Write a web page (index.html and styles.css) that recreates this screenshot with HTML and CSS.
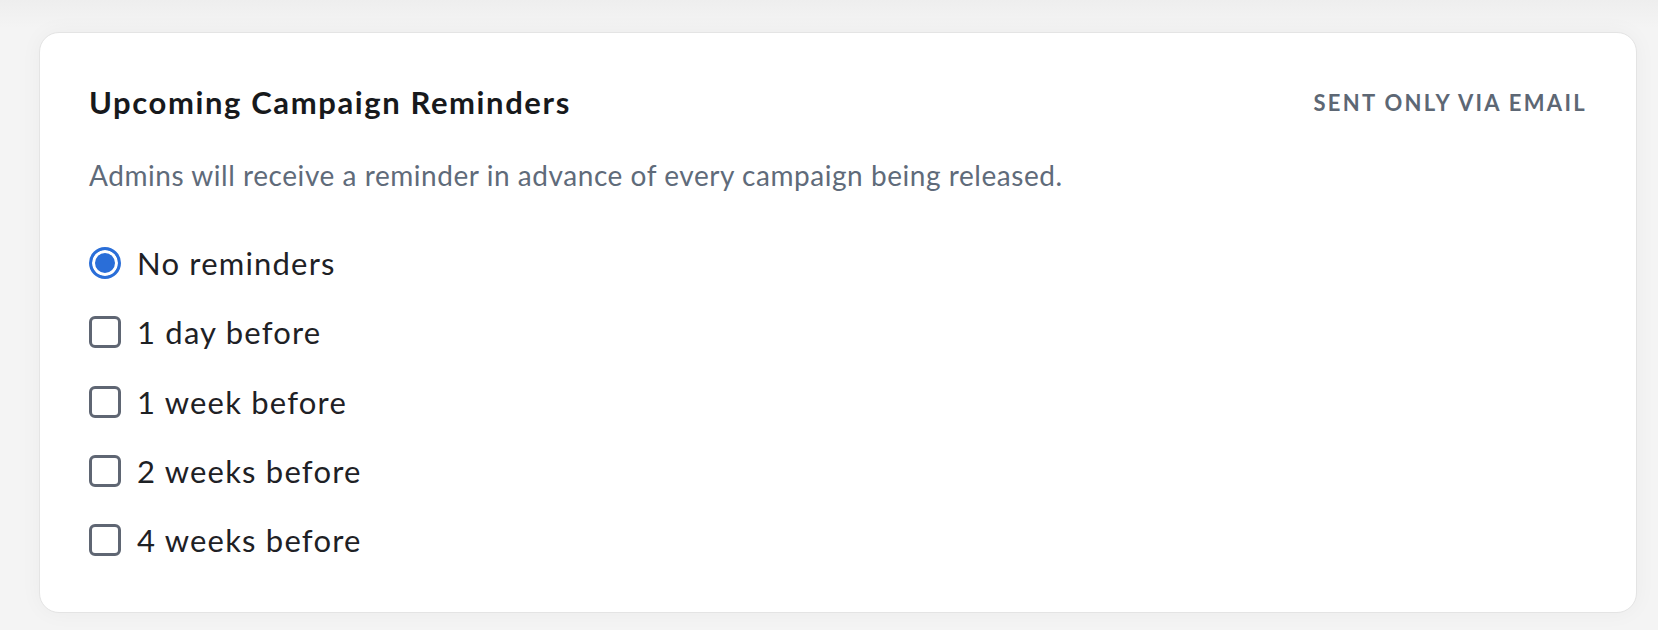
FILE: index.html
```html
<!DOCTYPE html>
<html lang="en">
<head>
    <meta charset="UTF-8">
    <meta name="viewport" content="width=device-width, initial-scale=1.0">
    <title>Notification Settings</title>
    <link rel="stylesheet" href="styles.css">
</head>
<body>

    <div class="page">
        <section class="card">
            <div class="card-header">
                <h2>Upcoming Campaign Reminders</h2>
                <span class="channel">Sent only via email</span>
            </div>

            <p class="hint">Admins will receive a reminder in advance of every campaign being released.</p>

            <div class="options">
                <label class="option">
                    <input type="radio" name="none" checked>
                    <span>No reminders</span>
                </label>
                <label class="option">
                    <input type="checkbox" name="day1">
                    <span>1 day before</span>
                </label>
                <label class="option">
                    <input type="checkbox" name="week1">
                    <span>1 week before</span>
                </label>
                <label class="option">
                    <input type="checkbox" name="week2">
                    <span>2 weeks before</span>
                </label>
                <label class="option">
                    <input type="checkbox" name="week4">
                    <span>4 weeks before</span>
                </label>
            </div>
        </section>
    </div>

</body>
</html>
```

FILE: styles.css
```css
body {
    margin: 0;
    font-family: Lato, "Noto Sans", sans-serif;
    background: linear-gradient(#eeeeee 0, #f4f4f4 28px) no-repeat, #f4f4f4;
    color: #1c1e21;
}
.page {
    padding: 32px 21px 17px 39px;
}
.card {
    background-color: white;
    border: 1px solid #e4e4e4;
    border-radius: 20px;
    padding: 49px 49px 54px 49px;
    box-shadow: 0 0 22px rgba(0, 0, 0, 0.04);
}
.card-header {
    display: flex;
    justify-content: space-between;
    align-items: center;
}
h2 {
    margin: 0;
    font-size: 31px;
    line-height: 40px;
    font-weight: 700;
    letter-spacing: 1.6px;
    color: #17191c;
}
.channel {
    font-size: 22px;
    font-weight: 700;
    letter-spacing: 2.3px;
    text-transform: uppercase;
    color: #5d6774;
}
.hint {
    margin: 35px 0 52px 0;
    font-size: 28px;
    line-height: 36px;
    letter-spacing: 0.55px;
    color: #5f6b7a;
}
.options {
    display: flex;
    flex-direction: column;
    gap: 33.3px;
}
.option {
    display: flex;
    align-items: center;
    gap: 16px;
    height: 36px;
    font-size: 31px;
    line-height: 36px;
    letter-spacing: 1.2px;
    color: #1e2125;
}
.option input {
    appearance: none;
    margin: 0;
    width: 32px;
    height: 32px;
    border: 3px solid #5f6673;
    border-radius: 6px;
    background-color: white;
}
.option input[type="radio"] {
    border-radius: 50%;
}
.option input[type="radio"]:checked {
    border-color: #2a6ed8;
    background-color: #2a6ed8;
    box-shadow: inset 0 0 0 3px white;
}
```
